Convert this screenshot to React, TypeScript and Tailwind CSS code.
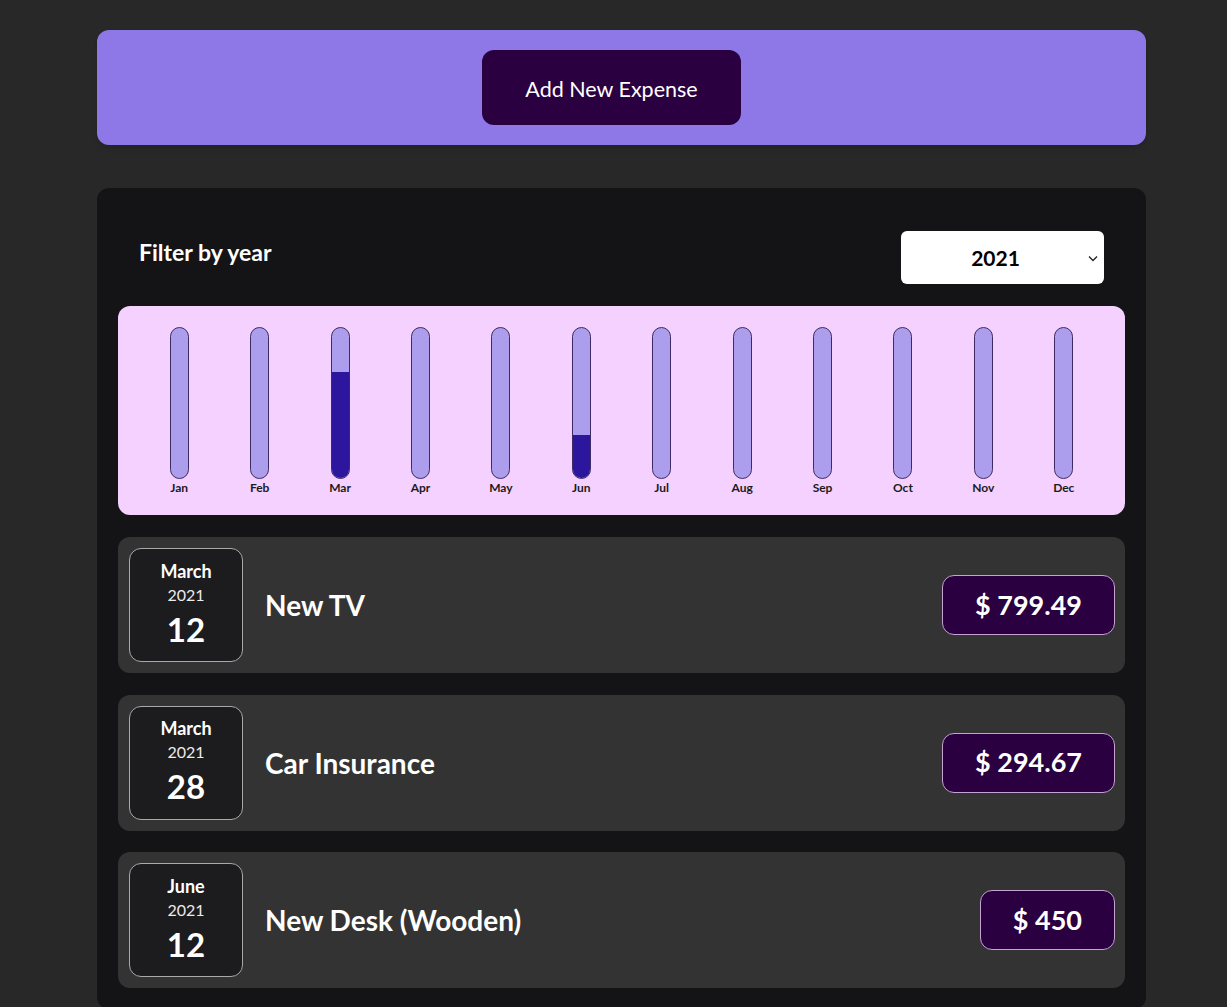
import { useState } from "react";

type Expense = {
  id: string;
  title: string;
  amount: string;
  month: string;
  year: string;
  day: string;
};

const expenses: Expense[] = [
  { id: "e1", title: "New TV", amount: "799.49", month: "March", year: "2021", day: "12" },
  { id: "e2", title: "Car Insurance", amount: "294.67", month: "March", year: "2021", day: "28" },
  { id: "e3", title: "New Desk (Wooden)", amount: "450", month: "June", year: "2021", day: "12" },
];

const months = [
  { label: "Jan", fill: 0 },
  { label: "Feb", fill: 0 },
  { label: "Mar", fill: 70.5 },
  { label: "Apr", fill: 0 },
  { label: "May", fill: 0 },
  { label: "Jun", fill: 29 },
  { label: "Jul", fill: 0 },
  { label: "Aug", fill: 0 },
  { label: "Sep", fill: 0 },
  { label: "Oct", fill: 0 },
  { label: "Nov", fill: 0 },
  { label: "Dec", fill: 0 },
];

function ChartBar({ label, fill }: { label: string; fill: number }) {
  return (
    <div className="flex flex-col items-center">
      <div className="flex h-[152px] w-[19px] flex-col justify-end overflow-hidden rounded-full border border-[#3e2b62] bg-[#ac9eec]">
        <div className="w-full bg-[#2d169e]" style={{ height: `${fill}%` }} />
      </div>
      <div className="mt-[1px] text-[12px] font-bold leading-[16px] text-[#1b1b1b]">{label}</div>
    </div>
  );
}

function ExpenseItem({ expense }: { expense: Expense }) {
  return (
    <div className="flex h-[136px] items-center rounded-xl bg-[#333333] py-[11px] pl-[11px] pr-[10px]">
      <div className="flex h-[114px] w-[114px] shrink-0 flex-col items-center justify-center rounded-xl border border-[#a9a9a9] bg-[#1c1b1e] text-white">
        <div className="text-[18px] font-bold leading-[23px]">{expense.month}</div>
        <div className="text-[16px] leading-[23px] text-[#ececec]">{expense.year}</div>
        <div className="mt-[1px] text-[33px] font-bold leading-[44px]">{expense.day}</div>
      </div>
      <h2 className="ml-[22px] flex-1 text-[28px] font-bold text-white">{expense.title}</h2>
      <div className="flex h-[60px] items-center rounded-xl border border-[#c6a3d2] bg-[#2a0040] px-[32px] text-[27px] font-bold text-white">
        $ {expense.amount}
      </div>
    </div>
  );
}

export default function App() {
  const [year, setYear] = useState("2021");

  return (
    <div
      className="min-h-screen bg-[#282828] pb-10 pt-[30px]"
      style={{ fontFamily: "Lato, 'Noto Sans', sans-serif" }}
    >
      <div className="ml-[97px] w-[1049px]">
        <div className="flex h-[115px] items-center justify-center rounded-xl bg-[#8e78e8] shadow-md">
          <button className="mr-[20px] h-[75px] w-[259px] rounded-xl bg-[#2a0040] pt-[3px] text-[21.5px] text-white">
            Add New Expense
          </button>
        </div>

        <div className="mt-[43px] rounded-xl bg-[#141316] p-[21px]">
          <div className="flex items-center justify-between px-[21px] py-[22px]">
            <label className="mb-[10px] text-[23px] font-bold text-white">Filter by year</label>
            <div className="relative">
              <select
                value={year}
                onChange={(e) => setYear(e.target.value)}
                className="h-[53px] w-[203px] appearance-none rounded-md bg-white pr-[14px] text-center text-[21px] font-bold text-black outline-none"
              >
                <option value="2022">2022</option>
                <option value="2021">2021</option>
                <option value="2020">2020</option>
                <option value="2019">2019</option>
              </select>
              <svg
                className="pointer-events-none absolute right-[6px] top-[24px]"
                width="10"
                height="7"
                viewBox="0 0 10 7"
                fill="none"
              >
                <path d="M1 1.5L5 5.5L9 1.5" stroke="#222" strokeWidth="1.3" />
              </svg>
            </div>
          </div>

          <div className="grid grid-cols-12 rounded-xl bg-[#f4d1fe] px-[21px] pb-[19px] pt-[21px]">
            {months.map((m) => (
              <ChartBar key={m.label} label={m.label} fill={m.fill} />
            ))}
          </div>

          <ul className="mt-[22px] flex flex-col gap-[21.5px]">
            {expenses.map((e) => (
              <li key={e.id}>
                <ExpenseItem expense={e} />
              </li>
            ))}
          </ul>
        </div>
      </div>
    </div>
  );
}
